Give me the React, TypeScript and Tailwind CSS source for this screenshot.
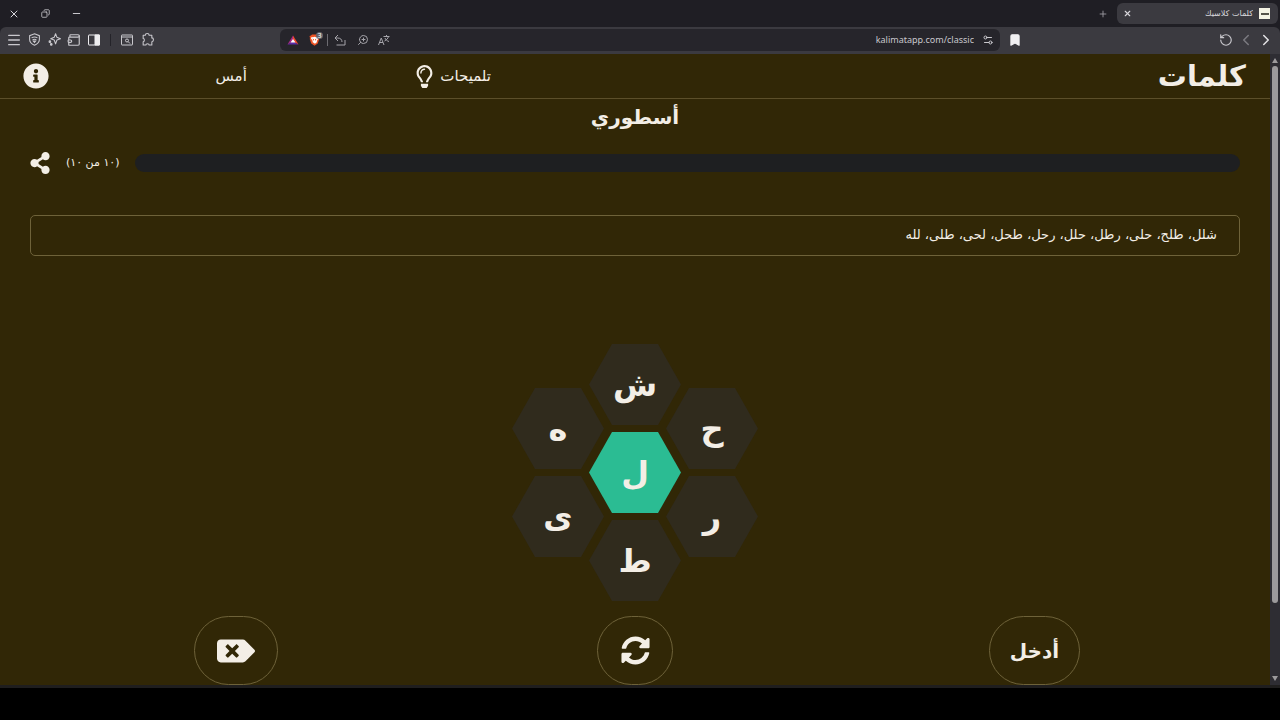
import type { ReactNode } from "react";
import {
  Bookmark,
  ChevronLeft,
  ChevronRight,
  Copy,
  Menu,
  Minus,
  Plus,
  RotateCcw,
  Settings2,
  Wallet,
  X,
  ZoomIn,
} from "lucide-react";
import { FaBackspace, FaInfoCircle, FaRegLightbulb, FaShareAlt, FaSyncAlt } from "react-icons/fa";

function IconButton({ label, className = "", children }: { label: string; className?: string; children: ReactNode }) {
  return (
    <button
      type="button"
      aria-label={label}
      className={`flex shrink-0 items-center justify-center [&>svg]:shrink-0 ${className}`}
    >
      {children}
    </button>
  );
}

function ShieldIcon() {
  return (
    <svg viewBox="0 0 24 24" className="size-[13px]" fill="none" stroke="currentColor" strokeWidth="2">
      <path d="M12 1.5 21 5v7c0 5-4 8.500-9 10.500C7 20.500 3 17 3 12V5z" />
      <path d="M6.500 9c3.500-2 7.500-2 11 0M8.500 12.500c2-1.200 5-1.200 7 0" />
      <path d="m10 15 2 2.500 2-2.500z" fill="currentColor" />
    </svg>
  );
}

function SparkIcon() {
  return (
    <svg viewBox="0 0 24 24" className="size-[13px]" fill="none" stroke="currentColor" strokeWidth="2" strokeLinejoin="round">
      <path d="M14 1.500 16.500 8 23 10.500 16.500 13 14 20l-2.500-7L5 10.500 11.500 8z" />
      <circle cx="3.500" cy="16" r="1.500" fill="currentColor" />
      <circle cx="6" cy="21" r="1.500" fill="currentColor" />
    </svg>
  );
}

function SidebarIcon() {
  return (
    <svg viewBox="0 0 24 24" className="size-3" fill="none" stroke="currentColor" strokeWidth="2">
      <rect x="1" y="2" width="22" height="20" rx="1" />
      <path d="M14 2h9v20h-9z" fill="currentColor" />
    </svg>
  );
}

function PageSearchIcon() {
  return (
    <svg viewBox="0 0 24 24" className="size-3" fill="none" stroke="currentColor" strokeWidth="2">
      <rect x="1" y="2" width="22" height="20" rx="1" />
      <path d="M1 6h22" />
      <circle cx="12" cy="13" r="3" />
      <path d="m14 15 4 4" />
    </svg>
  );
}

function PuzzleIcon() {
  return (
    <svg viewBox="0 0 24 24" className="size-[13px]" fill="none" stroke="currentColor" strokeWidth="2" strokeLinejoin="round">
      <path d="M4 4h4c0-4 7-4 7 0h5v5c4 0 4 7 0 7v6h-5c0-3-6-3-6 0H4v-6c3 0 3-6 0-6z" />
    </svg>
  );
}

function TriangleLogo() {
  return (
    <svg viewBox="0 0 24 20" className="h-[10px] w-3">
      <path d="M12 1 1 19l11-6z" fill="#a52a86" />
      <path d="m12 1 11 18-11-6z" fill="#f0472c" />
      <path d="M1 19h22l-11-6z" fill="#5b2ba8" />
      <path d="m12 8 5 7H7z" fill="#fff" />
    </svg>
  );
}

function LionLogo() {
  return (
    <svg viewBox="0 0 22 24" className="h-3 w-[11px]">
      <path d="M6 1h10l2 2 3 1-1 4 .500 2-3 9-6.500 4.500L4.500 19l-3-9L2 8 1 4l3-1z" fill="#ee5426" />
      <path d="m5 6 3 .500 3-1 3 1 3-.500 2 3-3.500 5 .500 2-4 3.500L7 16l.500-2L4 9z" fill="#fff" />
      <path d="m7 9 3 1.500L9 14zM15 9l-3 1.500 1 3.500z" fill="#ee5426" />
    </svg>
  );
}

function ShareArrowIcon() {
  return (
    <svg viewBox="0 0 24 24" className="size-3" fill="none" stroke="currentColor" strokeWidth="2">
      <path d="M8 2 2 8l6 6M2 8h5c6 0 9 3 9 8" />
      <path d="M5 22h17V12" />
    </svg>
  );
}

function TranslateIcon() {
  return (
    <svg viewBox="0 0 24 24" className="size-3" fill="none" stroke="currentColor" strokeWidth="2">
      <path d="M1 22 6.500 8 12 22M3 17h7" />
      <path d="M11 5h12M17 2v3M21 5c-1 4-4 7-8 9M14 8c1 3 4 6 8 7" />
    </svg>
  );
}

function TabStrip() {
  return (
    <div className="flex h-[27px] items-center justify-between bg-[#1f1e24] text-[#d8d7dc]">
      <div className="flex items-center gap-[19px] px-2">
        <IconButton label="إغلاق النافذة" className="size-3">
          <X size={12} />
        </IconButton>
        <IconButton label="استعادة" className="size-3">
          <Copy size={9} className="-scale-x-100" />
        </IconButton>
        <IconButton label="تصغير" className="size-3">
          <Minus size={11} />
        </IconButton>
      </div>
      <div className="flex items-center gap-2 pr-[2px]">
        <IconButton label="علامة تبويب جديدة" className="size-3 text-[#a5a4aa]">
          <Plus size={10} />
        </IconButton>
        <div className="flex h-[21px] w-[161px] items-center gap-2 rounded-md bg-[#3b3a40] pr-2 pl-1">
          <IconButton label="إغلاق علامة التبويب" className="size-3">
            <X size={9} strokeWidth={3} />
          </IconButton>
          <span dir="rtl" className="flex-1 truncate text-[8px] leading-3">
            كلمات كلاسيك
          </span>
          <span className="-ml-[2px] flex h-[11px] w-[11px] items-center justify-center bg-[#f4f3e4]">
            <span className="h-[2px] w-2 bg-[#55534a]" />
          </span>
        </div>
      </div>
    </div>
  );
}

function Toolbar() {
  return (
    <div className="bg-[#1f1e24]">
      <div className="flex h-[27px] items-center rounded-t-md bg-[#3b3a40] pb-[2px] text-[#c9c8cd]">
        <div className="flex w-[280px] items-center gap-2 pl-2">
          <IconButton label="القائمة" className="size-3">
            <Menu size={16} />
          </IconButton>
          <IconButton label="الخصوصية" className="size-3">
            <ShieldIcon />
          </IconButton>
          <IconButton label="المساعد" className="size-3">
            <SparkIcon />
          </IconButton>
          <IconButton label="المحفظة" className="size-3">
            <Wallet size={14} className="-scale-x-100" />
          </IconButton>
          <IconButton label="الشريط الجانبي" className="size-3 text-[#eeedf0]">
            <SidebarIcon />
          </IconButton>
          <span className="mx-[2px] h-3 w-px bg-[#242329]" />
          <IconButton label="بحث في الصفحة" className="size-3">
            <PageSearchIcon />
          </IconButton>
          <IconButton label="الإضافات" className="size-3">
            <PuzzleIcon />
          </IconButton>
        </div>
        <div className="flex h-[22px] flex-1 items-center rounded-md bg-[#26252b] px-[6px]">
          <div className="flex items-center gap-[11px] text-[#a5a4aa]">
            <IconButton label="المكافآت" className="w-[14px]">
              <TriangleLogo />
            </IconButton>
            <button type="button" aria-label="الدروع" className="relative -ml-[2px]">
              <LionLogo />
              <span className="absolute -top-[2px] left-[7px] flex size-[7px] items-center justify-center rounded-sm bg-[#66656b] font-['Noto_Sans',sans-serif] text-[7px] leading-none text-white">
                3
              </span>
            </button>
            <span className="-mr-[5px] -ml-1 h-3 w-px bg-[#6c6b71]" />
            <IconButton label="مشاركة الرابط" className="size-3">
              <ShareArrowIcon />
            </IconButton>
            <IconButton label="تكبير" className="size-3">
              <ZoomIn size={12} className="-scale-x-100" />
            </IconButton>
            <IconButton label="ترجمة" className="-ml-[2px] size-3">
              <TranslateIcon />
            </IconButton>
          </div>
          <input
            aria-label="عنوان الموقع"
            defaultValue="kalimatapp.com/classic"
            dir="ltr"
            className="min-w-0 flex-1 bg-transparent px-2 text-right font-['Noto_Sans',sans-serif] text-[9px] leading-3 text-[#c9c8cd] outline-none"
          />
          <IconButton label="معلومات الموقع" className="size-3">
            <Settings2 size={12} />
          </IconButton>
        </div>
        <div className="flex w-[280px] items-center justify-between pr-2 pl-[9px]">
          <IconButton label="إشارة مرجعية" className="size-3 text-[#f1f0f2]">
            <Bookmark size={14} fill="currentColor" />
          </IconButton>
          <div className="flex items-center gap-2">
            <IconButton label="إعادة التحميل" className="size-3">
              <RotateCcw size={14} />
            </IconButton>
            <IconButton label="السابق" className="size-3 text-[#7b7a80]">
              <ChevronLeft size={18} />
            </IconButton>
            <IconButton label="التالي" className="size-3 text-[#e4e3e6]">
              <ChevronRight size={18} />
            </IconButton>
          </div>
        </div>
      </div>
    </div>
  );
}

function Header() {
  return (
    <header className="flex h-[45px] items-center justify-between border-b border-[#5c4f2a] pr-6 pl-[23px]">
      <h1 className="text-[29px] leading-8 font-bold">كلمات</h1>
      <nav className="flex w-[468px] items-center justify-between text-[15px] leading-5">
        <button type="button" className="flex items-center gap-1">
          تلميحات
          <FaRegLightbulb size={23} />
        </button>
        <button type="button">أمس</button>
        <button type="button" aria-label="معلومات">
          <FaInfoCircle size={26} />
        </button>
      </nav>
    </header>
  );
}

function Hex({ letter, center = false }: { letter: string; center?: boolean }) {
  return (
    <button
      type="button"
      className={`flex h-[81px] w-[92px] items-center justify-center text-[32px] leading-10 font-bold [clip-path:polygon(25%_0,75%_0,100%_50%,75%_100%,25%_100%,0_50%)] ${
        center ? "bg-[#2bbc93]" : "bg-[#302b1d]"
      }`}
    >
      {letter}
    </button>
  );
}

const columns: string[][] = [
  ["ح", "ر"],
  ["ش", "ل", "ط"],
  ["ه", "ى"],
];

function Board() {
  return (
    <div className="flex items-center justify-center -space-x-[15px]">
      {columns.map((letters) => (
        <div key={letters[0]} className="flex flex-col gap-[7px]">
          {letters.map((letter) => (
            <Hex key={letter} letter={letter} center={letter === "ل"} />
          ))}
        </div>
      ))}
    </div>
  );
}

function Scrollbar() {
  return (
    <div aria-hidden="true" className="flex w-[10px] shrink-0 flex-col items-center bg-[#2e2d33] py-1 text-[#9c9a9c]">
      <svg viewBox="0 0 6 5" className="h-[5px] w-[6px]" fill="currentColor">
        <path d="M3 0 6 5H0z" />
      </svg>
      <div className="mt-[3px] w-[6px] flex-[88] rounded-full bg-[#9c9a9c]" />
      <div className="flex-[12]" />
      <svg viewBox="0 0 6 5" className="h-[5px] w-[6px]" fill="currentColor">
        <path d="M0 0h6L3 5z" />
      </svg>
    </div>
  );
}

const found = ["شلل", "طلح", "حلى", "رطل", "حلل", "رحل", "طحل", "لحى", "طلى", "لله"];

export default function App() {
  return (
    <div className="flex min-h-screen flex-col bg-black font-['DejaVu_Sans',sans-serif]">
      <TabStrip />
      <Toolbar />
      <div dir="rtl" className="flex flex-1 border-b-[3px] border-[#1f1e1e] bg-[#312706] text-[#f3eee6]">
        <Scrollbar />
        <div className="flex min-w-0 flex-1 flex-col">
          <Header />
          <main className="flex flex-1 flex-col px-[30px]">
            <h2 className="mt-[2px] text-center text-[20px] leading-8 font-bold">أسطوري</h2>
            <div className="mt-[18px] flex h-6 items-center">
              <div
                role="progressbar"
                aria-label="التقدم"
                aria-valuemin={0}
                aria-valuemax={10}
                aria-valuenow={10}
                className="h-[18px] flex-1 rounded-full bg-[#1e1f21]"
              />
              <span className="mx-[15px] text-[11px] leading-5">(١٠ من ١٠)</span>
              <button type="button" aria-label="مشاركة">
                <FaShareAlt size={22} className="-ml-[1px]" />
              </button>
            </div>
            <p className="mt-10 h-[41px] rounded-[5px] border border-[#6e6239] px-[22px] py-[9px] text-[13px] leading-5">
              {found.join("، ")}
            </p>
            <div className="mt-[88px]">
              <Board />
            </div>
            <div className="mt-[15px] grid grid-cols-3 justify-items-center px-[6px]">
              <button
                type="button"
                className="flex h-[69px] items-center rounded-full border border-[#6e6239] px-5 text-[20px] leading-8 font-bold"
              >
                أدخل
              </button>
              <button
                type="button"
                aria-label="خلط الحروف"
                className="flex h-[69px] w-[76px] items-center justify-center rounded-full border border-[#6e6239]"
              >
                <FaSyncAlt size={29} />
              </button>
              <button
                type="button"
                aria-label="حذف"
                className="flex h-[69px] w-[84px] items-center justify-center rounded-full border border-[#6e6239]"
              >
                <FaBackspace size={38} className="-scale-x-100" />
              </button>
            </div>
          </main>
        </div>
      </div>
      <div className="h-8" />
    </div>
  );
}
